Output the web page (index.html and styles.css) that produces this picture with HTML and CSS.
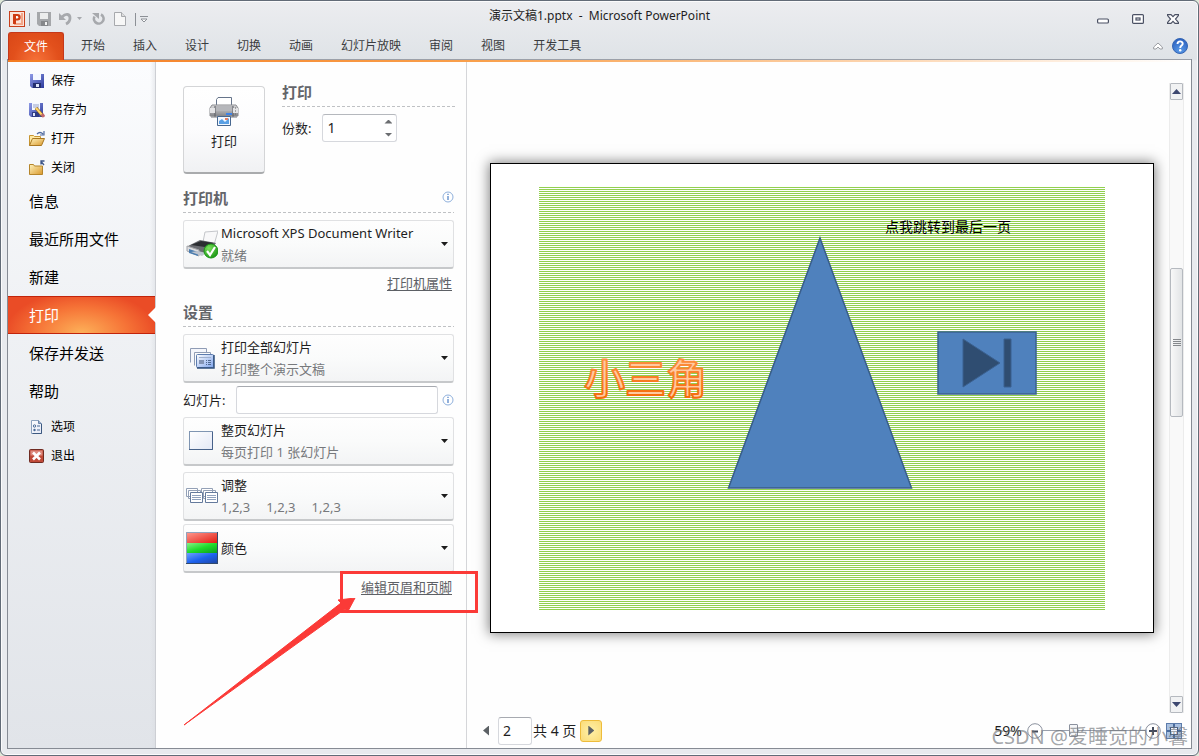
FILE: index.html
```html
<!DOCTYPE html>
<html lang="zh-CN">
<head>
<meta charset="utf-8">
<title>演示文稿1.pptx - Microsoft PowerPoint</title>
<link rel="stylesheet" href="styles.css">
</head>
<body>
<svg class="defs" width="0" height="0" aria-hidden="true">
  <defs>
    <linearGradient id="gBlue" x1="0" y1="0" x2="1" y2="1"><stop offset="0" stop-color="#8f9be6"/><stop offset="1" stop-color="#2b3a9c"/></linearGradient>
    <linearGradient id="gFolder" x1="0" y1="0" x2="1" y2="1"><stop offset="0" stop-color="#fff3bd"/><stop offset="1" stop-color="#d9982c"/></linearGradient>
    <linearGradient id="gMetal" x1="0" y1="0" x2="0" y2="1"><stop offset="0" stop-color="#dcdcde"/><stop offset="1" stop-color="#85868a"/></linearGradient>
    <linearGradient id="gPage" x1="0" y1="0" x2="1" y2="1"><stop offset="0" stop-color="#ffffff"/><stop offset="1" stop-color="#e3e8f6"/></linearGradient>
    <linearGradient id="gSlide" x1="0" y1="0" x2="1" y2="1"><stop offset="0" stop-color="#ffffff"/><stop offset="1" stop-color="#7ea4ec"/></linearGradient>
    <linearGradient id="gArt" x1="0" y1="0" x2="0" y2="1"><stop offset="0" stop-color="#ff9a50"/><stop offset="1" stop-color="#f26500"/></linearGradient>
    <linearGradient id="gR" x1="0" y1="0" x2="1" y2="1"><stop offset="0" stop-color="#ff9d92"/><stop offset="1" stop-color="#e11a10"/></linearGradient>
    <linearGradient id="gG" x1="0" y1="0" x2="1" y2="1"><stop offset="0" stop-color="#8af08a"/><stop offset=".5" stop-color="#1fdc2c"/><stop offset="1" stop-color="#0d9b1c"/></linearGradient>
    <linearGradient id="gB" x1="0" y1="0" x2="1" y2="1"><stop offset="0" stop-color="#6fa2ff"/><stop offset=".5" stop-color="#1d62ee"/><stop offset="1" stop-color="#1f439c"/></linearGradient>
    <radialGradient id="gOk" cx=".35" cy=".3" r=".8"><stop offset="0" stop-color="#7be25c"/><stop offset="1" stop-color="#159010"/></radialGradient>
    <radialGradient id="gHelp" cx=".5" cy=".8" r=".8"><stop offset="0" stop-color="#5b9be8"/><stop offset="1" stop-color="#2a5fbe"/></radialGradient>
    <symbol id="info" viewBox="0 0 12 12"><circle cx="6" cy="6" r="5" fill="#fff" stroke="#8fb0dc"/><path d="M6 5v4M6 2.8v1.2" stroke="#4a7cc4" stroke-width="1.2"/></symbol>
  </defs>
</svg>

<div class="window">
  <header class="titlebar">
    <div class="quick">
      <svg width="16" height="16" viewBox="0 0 16 16"><rect x=".5" y=".5" width="15" height="15" fill="#fbe3da" stroke="#c8401c"/><path d="M12 2h2v12H5v-2h7z" fill="#f3a78a"/><path d="M4 13V3h4.500a3.200 3.200 0 0 1 0 6.400H7V13z" fill="#cf3a12"/><path d="M7 5v2.500h1a1.200 1.200 0 0 0 0-2.500z" fill="#fff"/></svg>
      <i class="bar"></i>
      <button type="button" aria-label="保存"><svg width="14" height="14" viewBox="0 0 14 14"><path d="M0 0h14v14H2l-2-2z" fill="#a5a7aa"/><path d="M3 1h8v6H3z" fill="#eceded"/><path d="M4 9h7v5H4z" fill="#85878a"/><path d="M8 10h2v3H8z" fill="#f2f2f2"/></svg></button>
      <button type="button" class="undo" aria-label="撤消"><svg width="24" height="14" viewBox="0 0 24 14"><path d="M3 5c4-4 8-3 8 1 0 3-2 5-4 6" fill="none" stroke="#a7a9ad" stroke-width="2.800"/><path d="M0 1v7h7z" fill="#a7a9ad"/><path d="M18 5h5l-2.500 3z" fill="#a7a9ad"/></svg></button>
      <button type="button" class="redo" aria-label="恢复"><svg width="13" height="14" viewBox="0 0 13 14"><path d="M9 2.500a4.800 4.800 0 1 1-6.500 2" fill="none" stroke="#a7a9ad" stroke-width="2.600"/><path d="M0 1h7v6z" fill="#a7a9ad"/></svg></button>
      <button type="button" class="new" aria-label="新建"><svg width="12" height="14" viewBox="0 0 12 14"><path d="M.5.5h7l4 4v9H.5z" fill="#f7f7f7" stroke="#a7a9ad"/><path d="M7.500.5v4h4" fill="#ddd" stroke="#a7a9ad"/></svg></button>
      <i class="bar last"></i>
      <button type="button" class="more" aria-label="自定义快速访问工具栏"><svg width="8" height="7" viewBox="0 0 8 7"><path d="M0 .5h8" stroke="#8c9096"/><path d="M1 3h6l-3 3z" fill="#fff" stroke="#8c9096"/></svg></button>
    </div>
    <h1 class="title">演示文稿1.pptx&nbsp; -&nbsp; Microsoft PowerPoint</h1>
    <div class="controls">
      <button type="button" aria-label="最小化"><svg width="12" height="12" viewBox="0 0 12 12"><rect x=".6" y="6" width="10.800" height="4" rx="1" fill="#fff" stroke="#4b5164" stroke-width="1.200"/></svg></button>
      <button type="button" aria-label="还原"><svg width="12" height="12" viewBox="0 0 12 12"><rect x=".6" y="1.600" width="10.800" height="8.800" rx="1" fill="#fff" stroke="#4b5164" stroke-width="1.200"/><rect x="4" y="5" width="4" height="2" fill="#fff" stroke="#4b5164" stroke-width="1.200"/></svg></button>
      <button type="button" aria-label="关闭"><svg width="12" height="12" viewBox="0 0 12 12"><path d="M.6 1.600h3.400l2 2 2-2h3.400v1L8.500 6l2.900 3.400v1H8l-2-2-2 2H.6v-1L3.500 6 .6 2.600z" fill="#fff" stroke="#4b5164" stroke-width="1.200"/></svg></button>
    </div>
  </header>

  <nav class="tabs">
    <button type="button" class="file">文件</button>
    <div class="tablist">
      <button type="button">开始</button><button type="button">插入</button><button type="button">设计</button><button type="button">切换</button><button type="button">动画</button><button type="button">幻灯片放映</button><button type="button">审阅</button><button type="button">视图</button><button type="button">开发工具</button>
    </div>
    <div class="tabtools">
      <button type="button" aria-label="功能区最小化"><svg width="10" height="8" viewBox="0 0 10 8"><path d="M.7 5 5 1l4.300 4v2H7L5 5 3 7H.7z" fill="#fff" stroke="#9a9da2"/></svg></button>
      <button type="button" aria-label="帮助"><svg width="16" height="16" viewBox="0 0 16 16"><circle cx="8" cy="8" r="7.500" fill="url(#gHelp)" stroke="#3566b4"/><path d="M5.500 6c0-3.500 5.200-3.400 5.200-.3C10.700 7.600 8.200 7.600 8.200 10" fill="none" stroke="#fff" stroke-width="1.900"/><circle cx="8.200" cy="12.300" r="1.200" fill="#fff"/></svg></button>
    </div>
  </nav>

  <main class="backstage">
    <aside class="side">
      <button type="button" class="small"><svg width="16" height="16" viewBox="0 0 16 16"><path d="M1 1h14v14H3l-2-2z" fill="url(#gBlue)"/><path d="M4 1h8v6H4z" fill="#f4f8ff"/><path d="M4 10h8v5H4z" fill="#242f6e"/><path d="M7 11h3v3H7z" fill="#dfe6fa"/></svg>保存</button>
      <button type="button" class="small"><svg width="16" height="16" viewBox="0 0 16 16"><path d="M0 1h14v14H2l-2-2z" fill="url(#gBlue)"/><path d="M3 1h8v7H3z" fill="#f4f8ff"/><path d="M4 3h6M4 5h6" stroke="#98a3c9"/><path d="M3 10h7v5H3z" fill="#303c84"/><path d="M4 11h2v3H4z" fill="#dfe6fa"/><path d="m7 6 7 8" stroke="#8a5a1c" stroke-width="3.400"/><path d="m7 6 6 7" stroke="#ffd768" stroke-width="2"/><path d="m13 12 2 3" stroke="#c3676d" stroke-width="3"/></svg>另存为</button>
      <button type="button" class="small"><svg width="16" height="16" viewBox="0 0 16 16"><path d="M.5 14.500v-10h4l1 1h6v3" fill="#ffe9a2" stroke="#c79531"/><path d="m.5 14.500 3-7h12l-3 7z" fill="url(#gFolder)" stroke="#a97721"/><path d="M8 3c2-2 4-2 6 0m1-3v4h-4" fill="none" stroke="#4f6aa0" stroke-width="1.200"/></svg>打开</button>
      <button type="button" class="small"><svg width="16" height="16" viewBox="0 0 16 16"><path d="M.5 14.500v-10h4l1 1.500h8v8.500z" fill="url(#gFolder)" stroke="#b5852b"/><path d="m15 5-3-3.500M12 4.500V1h3.500" fill="none" stroke="#3e5688" stroke-width="1.300"/></svg>关闭</button>
      <button type="button" class="large">信息</button>
      <button type="button" class="large">最近所用文件</button>
      <button type="button" class="large">新建</button>
      <button type="button" class="large active">打印</button>
      <button type="button" class="large">保存并发送</button>
      <button type="button" class="large">帮助</button>
      <div class="tail">
        <button type="button" class="small"><svg width="16" height="16" viewBox="0 0 16 16"><path d="M2.500 1.500h7l3 3v10h-10z" fill="url(#gPage)" stroke="#8da3bf"/><path d="M12.500 5v9.500h-9" fill="none" stroke="#3c5980"/><path d="M9.500 1.500v3h3" fill="#9cb0ca" stroke="#6a84a8"/><circle cx="5.500" cy="7" r="1.200" fill="none" stroke="#496a96"/><circle cx="5.500" cy="11" r="1.200" fill="#496a96"/><path d="M8 7h3M8 11h3" stroke="#496a96"/></svg>选项</button>
        <button type="button" class="small"><svg width="16" height="16" viewBox="0 0 16 16"><rect x=".5" y="1.500" width="14" height="13" rx="1" fill="#c04a38" stroke="#6f2b22"/><path d="M1.500 2.500h12v5h-12z" fill="#dd8a7e"/><path d="m4 4.500 7 7m0-7-7 7" stroke="#fff" stroke-width="2.600"/></svg>退出</button>
      </div>
    </aside>

    <section class="settings">
      <div class="top">
        <button type="button" class="print">
          <svg width="30" height="32" viewBox="0 0 30 32"><path d="M7.500 12V3.500L9 1.500h13.500V12z" fill="#fff" stroke="#66748a"/><path d="M3 9h24l2 3v8H1v-8z" fill="url(#gMetal)" stroke="#8b8c90"/><path d="M6 10h18v5H6z" fill="#b6b7bb"/><path d="M6 10v11M24 10v11" stroke="#5b5d63"/><path d="M1 12h5v5H1zM24 12h5v5h-5z" fill="#e4e4e6"/><path d="M26 12h1M26 15h1M26 18h1" stroke="#666"/><path d="M17 17h6v2h-6z" fill="#3d82e8"/><path d="M2 21h26" stroke="#77787c"/><path d="M8.500 20.500h13v9h-13z" fill="#f3f8ff" stroke="#47678f"/><path d="M10 28v-3l3-2 3 3 4-4v6z" fill="#5aa0e4"/><path d="M16 22h3v2h-3z" fill="#e38267"/></svg>
          <span>打印</span>
        </button>
        <div class="copies">
          <h2>打印</h2>
          <div class="copyrow">
            <label for="copies">份数:</label>
            <span class="spin">
              <input id="copies" type="text" value="1">
              <span class="arrows"><button type="button" class="up" aria-label="增加"></button><button type="button" class="down" aria-label="减少"></button></span>
            </span>
          </div>
        </div>
      </div>

      <h2 class="printer">打印机<svg width="12" height="12"><use href="#info"/></svg></h2>
      <button type="button" class="card">
        <svg width="32" height="32" viewBox="0 0 32 32"><path d="m17 14 2-10 13-1-4 14z" fill="#f8f8f9" stroke="#c4c6ca"/><path d="m2 18 12-6 16 3-5 8-12 3z" fill="#6a6c71"/><path d="m5 17 10-4 13 2-9 4z" fill="#2b2d31"/><path d="m1 18 12 4v6L1 23z" fill="#dcdde0" stroke="#a2a4a9"/><path d="m3 21 9 3v4l-9-3z" fill="#4b7daf"/><path d="m5 24 7-1 8 2-4 3z" fill="#bdc4ce"/><circle cx="25" cy="23" r="7" fill="url(#gOk)" stroke="#1a9615"/><path d="m21 23 3 4 5-8" fill="none" stroke="#fff" stroke-width="2.200"/></svg>
        <span class="txt"><b>Microsoft XPS Document Writer</b><small>就绪</small></span><i class="caret"></i>
      </button>
      <a class="link" href="#props">打印机属性</a>

      <h2 class="setup">设置</h2>
      <button type="button" class="card">
        <svg width="32" height="32" viewBox="0 0 32 32"><path d="M4.500 20.500v-14h16v4M8.500 23.500v-13h16v3" fill="none" stroke="#8f9cb5"/><path d="M5 7h15v3H8v10H5z" fill="#f4f6fb"/><rect x="10.500" y="12.500" width="17" height="13" rx="1" fill="url(#gSlide)" stroke="#5c7cae"/><path d="M28 13v13H11" fill="none" stroke="#30507e" stroke-width="1.500"/><path d="M13 15.500h12" stroke="#9fb0ce"/><path d="M13 18h5v4h-5z" fill="#8495b5"/><path d="M20 18.500h1m1 0h3m-5 2h1m1 0h3m-5 2h1m1 0h3" stroke="#51698f"/></svg>
        <span class="txt"><b>打印全部幻灯片</b><small>打印整个演示文稿</small></span><i class="caret"></i>
      </button>
      <div class="sliderow">
        <label for="slides">幻灯片:</label>
        <input id="slides" type="text">
        <svg width="12" height="12"><use href="#info"/></svg>
      </div>
      <button type="button" class="card">
        <svg width="32" height="32" viewBox="0 0 32 32"><rect x="3.500" y="6.500" width="23" height="18" fill="url(#gPage)" stroke="#7f95b2"/><path d="M26.500 7v17.500H3" fill="none" stroke="#47628a"/></svg>
        <span class="txt"><b>整页幻灯片</b><small>每页打印 1 张幻灯片</small></span><i class="caret"></i>
      </button>
      <button type="button" class="card gap">
        <svg width="32" height="32" viewBox="0 0 32 32"><g fill="#fff" stroke="#93a0b6"><path d="M.5 8.500h11v8H.5zM2.500 10.500h12v8h-12zM15.500 8.500h11v8h-11zM17.500 10.500h12v8h-12z"/><path d="M4.500 12.500h12v10h-12zM19.500 12.500h12v10h-12z" stroke="#647a9c"/></g><path d="M6 15.500h9m-9 2h9m-9 2h9m6-4h9m-9 2h9m-9 2h9" stroke="#8fa1bd"/></svg>
        <span class="txt"><b>调整</b><small class="sets"><span>1,2,3</span><span>1,2,3</span><span>1,2,3</span></small></span><i class="caret"></i>
      </button>
      <button type="button" class="card near">
        <svg width="32" height="32" viewBox="0 0 32 32"><path fill="url(#gR)" d="M0 0h32v11H0z"/><path fill="url(#gG)" d="M0 11h32v10H0z"/><path fill="url(#gB)" d="M0 21h32v11H0z"/><path d="M.5 31.500V.5h31" fill="none" stroke="#8fa2bd"/><path d="M31.500 0v31.500H0" fill="none" stroke="#31496c"/></svg>
        <span class="txt"><b>颜色</b></span><i class="caret"></i>
      </button>
      <div class="footlink">
        <a class="link" href="#headerfooter">编辑页眉和页脚</a>
        <span class="callout"></span>
        <svg class="arrow" width="172" height="128" viewBox="0 0 172 128"><path d="M0 127 157 5l-3-3 17-2-8 15-2-4z" fill="#fb3a37" stroke="#fb3a37"/></svg>
      </div>
    </section>

    <section class="preview">
      <div class="view">
        <div class="stage">
          <div class="paper">
            <svg class="slide" viewBox="0 0 566 423" role="img" aria-label="幻灯片预览">
              <text x="346" y="45" class="note">点我跳转到最后一页</text>
              <path d="M281 51 372.500 301h-183z" fill="#4f81bd" stroke="#385d8a" stroke-width="1.500"/>
              <text x="45" y="207" class="art">小三角</text>
              <path d="M399 145h98v62h-98z" fill="#4f81bd" stroke="#3b6190" stroke-width="1.500"/>
              <path d="m424 152 37 24-37 24zM465 152h7v48h-7z" fill="#2f4d71" stroke="#3b6190"/>
            </svg>
          </div>
        </div>
        <div class="scroll">
          <button type="button" class="sup" aria-label="向上滚动"></button>
          <div class="track"><div class="thumb"><i></i></div></div>
          <button type="button" class="sdown" aria-label="向下滚动"></button>
        </div>
      </div>
      <footer class="status">
        <button type="button" class="prev" aria-label="上一页"></button>
        <input id="page" type="text" value="2" aria-label="当前页">
        <label for="page">共 4 页</label>
        <button type="button" class="next" aria-label="下一页"></button>
        <div class="zoom">
          <span>59%</span>
          <button type="button" aria-label="缩小"><svg width="16" height="16" viewBox="0 0 16 16"><circle cx="8" cy="8" r="7.300" fill="#fff" stroke="#8b919e"/><path d="M5 8.500h6" stroke="#444b5c" stroke-width="2"/></svg></button>
          <input type="range" min="0" max="100" value="28" aria-label="显示比例">
          <button type="button" aria-label="放大"><svg width="16" height="16" viewBox="0 0 16 16"><circle cx="8" cy="8" r="7.300" fill="#fff" stroke="#8b919e"/><path d="M4 8h8M8 4v8" stroke="#444b5c" stroke-width="2"/></svg></button>
          <button type="button" class="fit" aria-label="缩放到页面"><svg width="16" height="16" viewBox="0 0 16 16"><rect x=".5" y=".5" width="15" height="15" fill="#a9c0e0" stroke="#5c7cab"/><rect x="4.500" y="4.500" width="7" height="7" fill="#f3f7ff" stroke="#36588c"/><path d="M8 1v3M8 12v3M1 8h3M12 8h3" stroke="#4a6c9e" stroke-width="2"/></svg></button>
        </div>
        <div class="mark">CSDN @爱睡觉的小馨</div>
      </footer>
    </section>
  </main>
</div>
</body>
</html>
```

FILE: styles.css
```css
* { box-sizing: border-box; }
body { margin: 0; background: #dfe8d8; color: #1e1e1e; font: 12px/16px "Noto Sans", "Noto Sans CJK SC", sans-serif; }
button { margin: 0; padding: 0; border: 0; background: none; font: inherit; color: inherit; }
input { font: inherit; color: inherit; margin: 0; }
h1, h2 { margin: 0; font-weight: 400; }
svg { display: block; flex: none; }
.defs { position: absolute; }

.window { height: 100vh; min-height: 700px; display: flex; flex-direction: column; border: 1px solid #626b77; border-radius: 6px; padding: 0 6px 6px; background: linear-gradient(#ecedf0, #dfe3e7 58px, #e8eaee 60px); box-shadow: inset 0 0 0 1px #fbfbfc; }

/* title bar */
.titlebar { flex: none; height: 31px; display: grid; grid-template-columns: 1fr auto 1fr; align-items: center; }
.quick { display: flex; align-items: center; padding: 5px 0 0 2px; }
.quick .bar { width: 1px; height: 13px; margin: 0 7px 0 4px; background: #8c9096; }
.quick .undo { margin-left: 8px; }
.quick .redo { margin-left: 9px; }
.quick .new { margin-left: 9px; }
.quick .last { margin: 0 4px 0 9px; }
.title { padding-bottom: 2px; font-size: 12px; line-height: 16px; }
.controls { display: flex; justify-content: flex-end; gap: 23px; padding: 5px 13px 0 0; }

/* ribbon tabs */
.tabs { flex: none; height: 27px; display: flex; padding-left: 1px; color: #3a3c40; }
.file { width: 56px; height: 28px; position: relative; color: #fff; border: 1px solid #c5381a; border-bottom: 0; border-radius: 3px 3px 0 0; background: radial-gradient(ellipse at 50% 110%, #f7733a, #e2501c 60%, #d94717); }
.tablist { display: flex; margin-left: 3px; }
.tablist button { padding: 0 14px; }
.tabtools { display: flex; align-items: center; gap: 9px; margin-left: auto; padding-right: 4px; }

/* backstage */
.backstage { flex: 1; min-height: 0; display: flex; border: 1px solid #868b94; border-top: 0; background: linear-gradient(#9ba0a9, #9ba0a9) 0 0 / 100% 1px no-repeat, linear-gradient(90deg, #f47c22, #f9a04c 40%, #fff 100%) 0 1px / 100% 2px no-repeat, #fefefe; padding-top: 3px; }
.side { flex: none; width: 148px; padding-top: 4px; border-right: 1px solid #cdcfd4; background: linear-gradient(90deg, transparent 142px, #d9dce180), linear-gradient(#fbfcfe, #f0f2f5 35%, #e1e4e9); color: #000; }
.side button { display: flex; align-items: center; width: 100%; text-align: left; }
.small { height: 29px; padding-left: 21px; gap: 6px; }
.large { height: 38px; padding-left: 21px; font-size: 15px; }
.active { position: relative; color: #fff; border: solid #c2240b; border-width: 1px 0; background: radial-gradient(ellipse 76px 42px at 50% 100%, #fdb159, #f67437 60%, #ea4c26); }
.active::after { content: ""; position: absolute; right: -1px; top: 10px; border: solid transparent; border-width: 8px 8px 8px 0; border-right-color: #fff; }
.tail { padding-top: 2px; }

/* print settings */
.settings { flex: none; width: 311px; padding: 24px 12px 0 27px; border-right: 1px solid #d5d6d9; font-size: 13px; }
.top { display: flex; gap: 17px; }
.print { width: 82px; height: 88px; padding-top: 9px; border: 1px solid #d4d5d7; border-bottom: 2px solid #a9abad; border-radius: 4px; background: linear-gradient(#fff, #fcfcfd 50%, #f0f1f3); display: flex; flex-direction: column; align-items: center; gap: 4px; }
.print span { line-height: 18px; }
h2 { display: flex; justify-content: space-between; align-items: center; height: 21px; padding-bottom: 10px; font-size: 15px; line-height: 20px; font-weight: 600; color: #63656a; background: repeating-linear-gradient(90deg, #bfc1c4 0 3px, transparent 3px 5px) 0 100% / 100% 1px no-repeat; }
.copies { flex: 1; margin-right: -1px; }
.copyrow { display: flex; align-items: center; gap: 11px; margin-top: 7px; }
.spin { display: flex; width: 75px; height: 28px; border: 1px solid #d6d8dd; border-top-color: #b5b8bd; border-radius: 3px; background: #fff; }
.spin input { flex: 1; min-width: 0; padding: 0 4px; border: 0; background: none; font-size: 14px; }
.arrows { width: 12px; display: flex; flex-direction: column; justify-content: center; gap: 9px; }
.up, .down { width: 8px; height: 4px; background: #6b6d70; clip-path: polygon(50% 0, 100% 100%, 0 100%); }
.down { clip-path: polygon(0 0, 100% 0, 50% 100%); }
.printer { margin-top: 18px; }
.printer svg { margin-top: -2px; }
.printer + .card, .setup + .card { margin-top: 7px; }
.card { display: flex; align-items: center; gap: 3px; width: 100%; height: 49px; padding: 0 5px 0 2px; text-align: left; border: 1px solid #e0e1e3; border-bottom: 2px solid #c6c8ca; border-radius: 3px; background: linear-gradient(#fefefe, #fafbfb 50%, #f3f4f5); }
.txt { flex: 1; display: flex; flex-direction: column; gap: 4px; }
.txt b { font-weight: 400; line-height: 18px; white-space: nowrap; }
.txt small { font-size: 13px; line-height: 18px; color: #77797c; }
.sets { display: flex; gap: 16px; }
.caret { width: 7px; height: 4px; background: #1c1c1c; clip-path: polygon(0 0, 100% 0, 50% 100%); }
.link { display: block; width: max-content; margin: 5px 2px 0 auto; line-height: 18px; color: #5d6065; text-underline-offset: 2px; }
.setup { margin-top: 14px; }
.sliderow { display: flex; align-items: center; gap: 4px; margin: 3px 0; }
.sliderow label { width: 49px; }
.sliderow input { flex: 1; min-width: 0; height: 28px; border: 1px solid #d6d8dd; border-top-color: #a7aab0; border-radius: 3px; background: #fff; }
.gap { margin-top: 6px; }
.near { margin-top: 3px; }
.footlink { position: relative; }
.callout { position: absolute; top: -7px; right: -24px; width: 138px; height: 42px; border: 3px solid #fb3a37; }
.arrow { position: absolute; top: 20px; right: 98px; }

/* preview */
.preview { flex: 1; min-width: 0; display: flex; flex-direction: column; background: #fefefe; }
.view { flex: 1; min-height: 0; display: flex; padding: 21px 7px 0 23px; }
.stage { flex: 1; min-width: 0; display: flex; align-items: center; padding-right: 15px; }
.paper { width: 100%; border: 1px solid #000; padding: 23px 48px 22px; background: #fff; box-shadow: 0 0 12px 1px #00000080; }
.slide { width: 100%; height: auto; background: repeating-linear-gradient(#92d050 0 1px, #fff 1px 2px); }
.note { font: 14px "Noto Sans CJK SC", sans-serif; fill: #000; }
.art { font: 500 41px "Noto Sans CJK SC", sans-serif; fill: #ffc9a0; stroke: url(#gArt); stroke-width: 2px; stroke-linejoin: round; }
.scroll { flex: none; width: 15px; display: flex; flex-direction: column; background: #f9f9f9; border: solid #ececec; border-width: 0 1px; }
.scroll button { position: relative; height: 17px; flex: none; border: 1px solid #b5b9bf; border-radius: 1px; background: #f1f2f3; }
.scroll button::after { content: ""; display: block; width: 9px; height: 5px; margin: auto; background: #3d4870; clip-path: polygon(50% 0, 100% 100%, 0 100%); }
.scroll .sdown::after { clip-path: polygon(0 0, 100% 0, 50% 100%); }
.track { flex: 1; display: grid; grid-template-rows: 168fr 149fr 279fr; }
.thumb { grid-row: 2; display: grid; place-items: center; border: 1px solid #b5b9bf; border-radius: 2px; background: linear-gradient(90deg, #f8f8f8, #e2e4e6); }
.thumb i { width: 8px; height: 7px; background: repeating-linear-gradient(#85888c 0 1px, transparent 1px 2px); }

.status { position: relative; flex: none; height: 35px; display: flex; align-items: center; padding: 0 9px 0 16px; font-size: 14px; }
.prev { width: 6px; height: 10px; background: #5c6165; clip-path: polygon(100% 0, 100% 100%, 0 50%); }
#page { width: 34px; height: 28px; margin: 0 1px 0 9px; padding: 0 4px; border: 1px solid #d6d8dd; border-top-color: #a7aab0; border-radius: 3px; background: #fff; }
.next { display: grid; place-items: center; width: 22px; height: 22px; margin-left: 4px; border: 1px solid #eebc3b; border-radius: 3px; background: radial-gradient(#fff0a8, #fbdc78); }
.next::after { content: ""; width: 6px; height: 10px; background: #5c6165; clip-path: polygon(0 0, 100% 50%, 0 100%); }
.zoom { display: flex; align-items: center; margin-left: auto; }
.zoom span { margin-right: 5px; }
.zoom input { appearance: none; width: 102px; height: 16px; background: linear-gradient(#9aa0ac, #9aa0ac) 0 50% / 100% 1px no-repeat; }
.zoom input::-webkit-slider-thumb { appearance: none; width: 9px; height: 13px; border: 1px solid #8b919e; border-radius: 1px; background: #f5f6f8; }
.fit { margin-left: 5px; }
.mark { position: absolute; right: 3px; bottom: -3px; font-size: 20px; line-height: 28px; white-space: nowrap; color: #6f7378a6; pointer-events: none; }
```
